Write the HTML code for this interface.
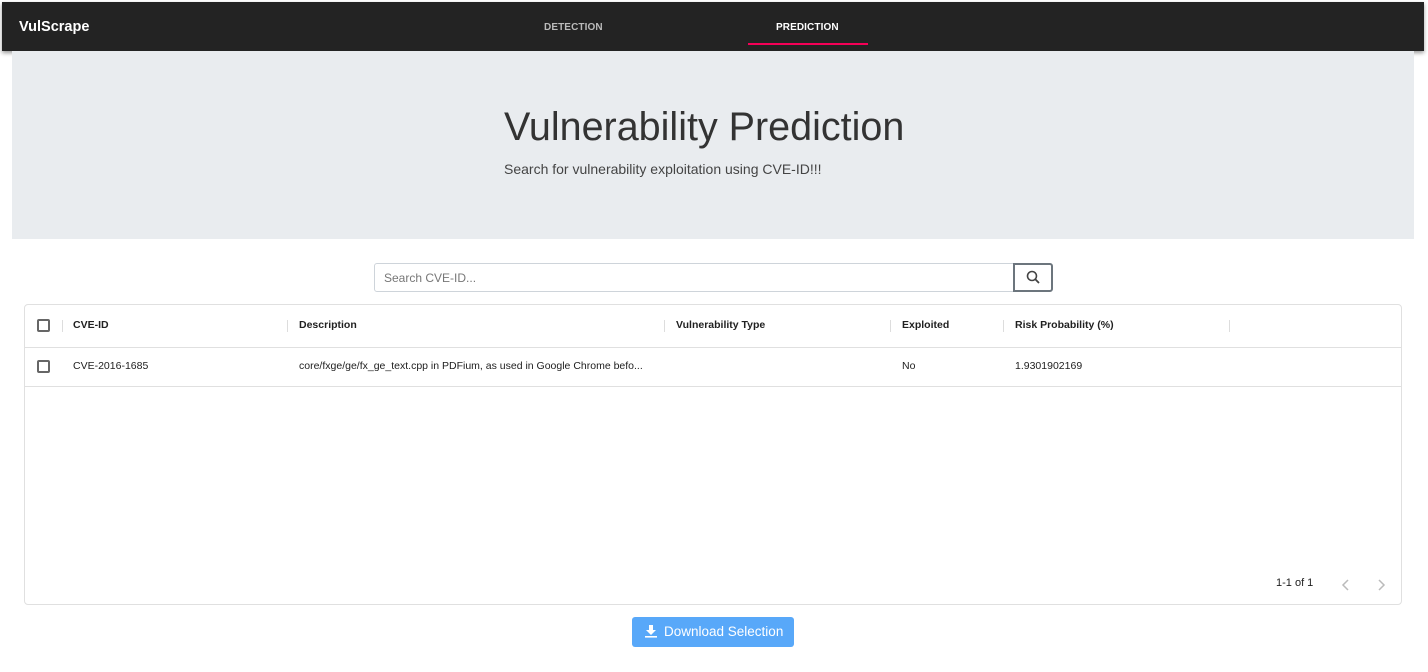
<!DOCTYPE html>
<html><head><meta charset="utf-8"><style>
*{box-sizing:border-box;margin:0;padding:0}
body{width:1428px;height:672px;background:#fff;font-family:"Liberation Sans",sans-serif;position:relative;overflow:hidden;color:#212121}
.nav{position:absolute;left:2px;top:2px;width:1422px;height:49px;background:#232323;box-shadow:0 2px 4px rgba(0,0,0,.4)}
.brand{position:absolute;left:17px;top:17px;color:#fff;font-weight:bold;font-size:14.5px}
.tab{position:absolute;top:20px;font-size:10px;font-weight:bold;letter-spacing:.1px}
.ind{position:absolute;left:746px;top:41px;width:120px;height:2px;background:#f50057}
.hero{position:absolute;left:12px;top:51px;width:1402px;height:188px;background:#e9ecef}
.hero h1{position:absolute;left:492px;top:54px;font-weight:300;font-size:39.5px;color:#333;white-space:nowrap}
.hero p{position:absolute;left:492px;top:110px;font-size:14px;color:#444}
.search{position:absolute;left:374px;top:263px;width:640px;height:29px;border:1px solid #ced4da;border-radius:3px 0 0 3px;font-size:12px;color:#777;padding:7px 9px}
.sbtn{position:absolute;left:1013px;top:263px;width:40px;height:29px;border:2px solid #6c757d;border-radius:0 3px 3px 0;background:#fff}
.grid{position:absolute;left:24px;top:304px;width:1378px;height:301px;border:1px solid #e0e0e0;border-radius:4px}
.hd{position:absolute;top:0;left:0;right:0;height:43px;border-bottom:1px solid #e0e0e0}
.row{position:absolute;top:43px;left:0;right:0;height:39px;border-bottom:1px solid #e0e0e0}
.c{position:absolute;font-size:10.5px;white-space:nowrap}
.hd .c{top:14px;font-weight:bold}
.row .c{top:12px}
.sep{position:absolute;top:15px;width:1px;height:12px;background:#ddd}
.cb{position:absolute;left:12px;width:13px;height:13px;border:2px solid #666;border-radius:2px}
.pg{position:absolute;top:272px;font-size:11px}
.dl{position:absolute;left:632px;top:617px;width:162px;height:30px;background:#58a8f9;border-radius:3px;color:#fff;font-size:13.5px;padding:7px 0 0 32px}
</style></head><body>
<div class="nav">
<div class="brand">VulScrape</div>
<div class="tab" style="left:542px;color:#bbb">DETECTION</div>
<div class="tab" style="left:774px;color:#fff">PREDICTION</div>
<div class="ind"></div>
</div>
<div class="hero"><h1>Vulnerability Prediction</h1><p>Search for vulnerability exploitation using CVE-ID!!!</p></div>
<div class="search">Search CVE-ID...</div>
<div class="sbtn"><svg width="36" height="25" viewBox="0 0 36 25"><circle cx="17" cy="11" r="4.5" fill="none" stroke="#444" stroke-width="1.6"/><line x1="20.3" y1="14.3" x2="24" y2="18" stroke="#444" stroke-width="1.8"/></svg></div>
<div class="grid">
<div class="hd">
<div class="cb" style="top:14px"></div>
<div class="sep" style="left:37px"></div><div class="c" style="left:48px">CVE-ID</div>
<div class="sep" style="left:262px"></div><div class="c" style="left:274px">Description</div>
<div class="sep" style="left:639px"></div><div class="c" style="left:651px">Vulnerability Type</div>
<div class="sep" style="left:865px"></div><div class="c" style="left:877px">Exploited</div>
<div class="sep" style="left:978px"></div><div class="c" style="left:990px">Risk Probability (%)</div>
<div class="sep" style="left:1204px"></div>
</div>
<div class="row">
<div class="cb" style="top:12px"></div>
<div class="c" style="left:48px">CVE-2016-1685</div>
<div class="c" style="left:274px">core/fxge/ge/fx_ge_text.cpp in PDFium, as used in Google Chrome befo...</div>
<div class="c" style="left:877px">No</div>
<div class="c" style="left:990px">1.9301902169</div>
</div>
<div class="pg" style="left:1251px">1-1 of 1</div>
<svg style="position:absolute;left:1316px;top:274px" width="10" height="12" viewBox="0 0 10 12"><path d="M7 1L2 6l5 5" fill="none" stroke="#bbb" stroke-width="1.5"/></svg>
<svg style="position:absolute;left:1351px;top:274px" width="10" height="12" viewBox="0 0 10 12"><path d="M3 1l5 5-5 5" fill="none" stroke="#bbb" stroke-width="1.5"/></svg>
</div>
<div class="dl"><svg style="position:absolute;left:13px;top:8px" width="12" height="13" viewBox="0 0 12 13"><path d="M4 0h4v5h3L6 10 1 5h3z" fill="#fff"/><rect x="0" y="11" width="12" height="1.6" fill="#fff"/></svg>Download Selection</div>
</body></html>
